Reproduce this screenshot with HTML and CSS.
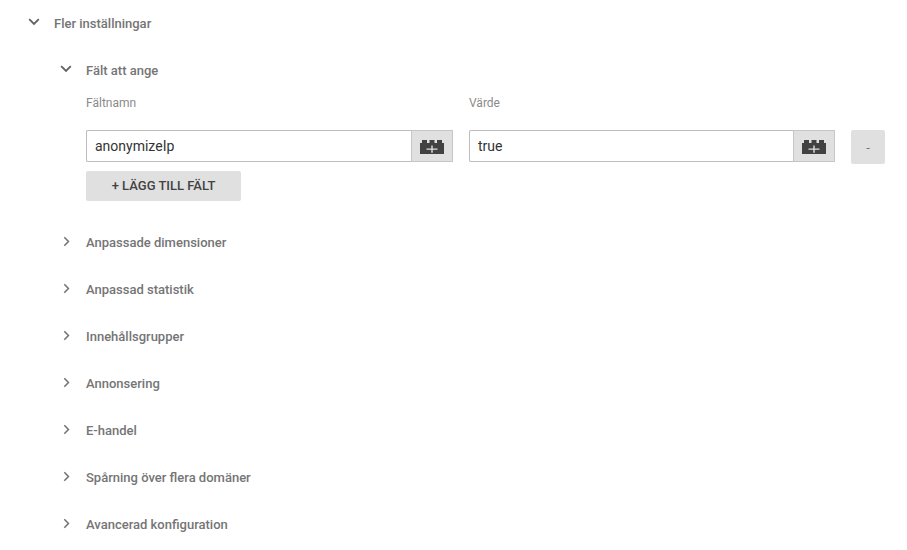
FILE: index.html
```html
<!DOCTYPE html>
<html lang="sv">
<head>
    <meta charset="UTF-8">
    <meta name="viewport" content="width=device-width, initial-scale=1.0">
    <title>Fler inställningar</title>
    <link rel="stylesheet" href="styles.css">
</head>
<body>

    <svg class="icon-defs" width="0" height="0">
        <symbol id="chevron-down" viewBox="0 0 12 8">
            <path d="M1.200 1.200 L6 6 L10.800 1.200" fill="none" stroke="currentColor" stroke-width="1.800"/>
        </symbol>
        <symbol id="chevron-right" viewBox="0 0 8 12">
            <path d="M1.500 1.200 L6.200 6 L1.500 10.800" fill="none" stroke="currentColor" stroke-width="1.800"/>
        </symbol>
        <symbol id="brick" viewBox="0 0 24 15">
            <path fill-rule="evenodd" d="M0 4h2V1h5v3h2.500V1h5v3H17V1h5v3h2v11H0z M11.300 6.500v3H6.500v1.300h4.800v3h1.400v-3h4.800V9.500h-4.800v-3z" fill="currentColor"/>
        </symbol>
    </svg>

    <div class="settings">
        <div class="section-head top-head">
            <svg class="chev-down"><use href="#chevron-down"/></svg>
            <span>Fler inställningar</span>
        </div>

        <div class="nested">
            <div class="section-head open-head">
                <svg class="chev-down"><use href="#chevron-down"/></svg>
                <span>Fält att ange</span>
            </div>

            <!-- Field rows -->
            <div class="fields">
                <div class="field-labels">
                    <label>Fältnamn</label>
                    <label>Värde</label>
                </div>
                <div class="field-row">
                    <div class="input-group">
                        <input type="text" value="anonymizeIp">
                        <button class="var-btn"><svg><use href="#brick"/></svg></button>
                    </div>
                    <div class="input-group value-group">
                        <input type="text" value="true">
                        <button class="var-btn"><svg><use href="#brick"/></svg></button>
                    </div>
                    <button class="remove-btn">-</button>
                </div>
                <button class="add-btn">+ LÄGG TILL FÄLT</button>
            </div>

            <!-- Collapsed sections -->
            <ul class="collapsed">
                <li class="section-head"><svg class="chev-right"><use href="#chevron-right"/></svg><span>Anpassade dimensioner</span></li>
                <li class="section-head"><svg class="chev-right"><use href="#chevron-right"/></svg><span>Anpassad statistik</span></li>
                <li class="section-head"><svg class="chev-right"><use href="#chevron-right"/></svg><span>Innehållsgrupper</span></li>
                <li class="section-head"><svg class="chev-right"><use href="#chevron-right"/></svg><span>Annonsering</span></li>
                <li class="section-head"><svg class="chev-right"><use href="#chevron-right"/></svg><span>E-handel</span></li>
                <li class="section-head"><svg class="chev-right"><use href="#chevron-right"/></svg><span>Spårning över flera domäner</span></li>
                <li class="section-head"><svg class="chev-right"><use href="#chevron-right"/></svg><span>Avancerad konfiguration</span></li>
            </ul>
        </div>
    </div>

</body>
</html>
```

FILE: styles.css
```css
/* Global Styles */
html, body {
    margin: 0;
    padding: 0;
    height: 100%;
    overflow: hidden;
    background: #fff;
    font-family: Roboto, "Liberation Sans", sans-serif;
}

.icon-defs {
    display: block;
    height: 0;
}

.settings {
    padding: 15px 0 0 28px;
}

/* Section headings */
.section-head {
    display: flex;
    align-items: center;
    height: 16px;
    color: #757575;
    font-size: 13px;
    font-weight: 500;
}

.chev-down {
    width: 12px;
    height: 8px;
    margin-right: 14px;
    margin-bottom: 2px;
    color: #616161;
}

.chev-right {
    width: 7px;
    height: 11px;
    margin-left: 3px;
    margin-right: 16px;
    margin-bottom: 2px;
    color: #757575;
}

.nested {
    padding: 31px 0 0 32px;
}

/* Fields */
.fields {
    padding: 18px 0 0 26px;
}

.field-labels {
    display: flex;
    height: 15px;
    color: #8a8a8a;
    font-size: 12px;
    line-height: 15px;
}

.field-labels label {
    width: 383px;
}

.field-row {
    display: flex;
    align-items: flex-start;
    margin-top: 19px;
}

.input-group {
    display: flex;
    width: 367px;
    height: 32px;
    margin-right: 16px;
}

.value-group {
    width: 366px;
}

.input-group input {
    flex: 1;
    min-width: 0;
    box-sizing: border-box;
    height: 32px;
    padding: 0 8px;
    border: 1px solid #bdbdbd;
    border-right: none;
    border-radius: 2px 0 0 2px;
    outline: none;
    color: #333;
    font-family: inherit;
    font-size: 14px;
}

.var-btn {
    display: flex;
    justify-content: center;
    align-items: center;
    width: 42px;
    height: 32px;
    padding: 0;
    background: #e0e0e0;
    border: 1px solid #c6c6c6;
    color: #424242;
}

.var-btn svg {
    width: 24px;
    height: 15px;
}

.remove-btn {
    width: 34px;
    height: 34px;
    padding: 0;
    background: #e0e0e0;
    border: none;
    border-radius: 2px;
    color: #757575;
    font-family: inherit;
    font-size: 13px;
}

.add-btn {
    display: block;
    width: 155px;
    height: 30px;
    margin-top: 7px;
    padding: 0 0 2px;
    background: #e0e0e0;
    border: none;
    border-radius: 2px;
    color: #424242;
    font-family: inherit;
    font-size: 13px;
    font-weight: 500;
}

/* Collapsed sections */
.collapsed {
    list-style: none;
    margin: 33px 0 0;
    padding: 0;
}

.collapsed li {
    margin-bottom: 31px;
}
```
